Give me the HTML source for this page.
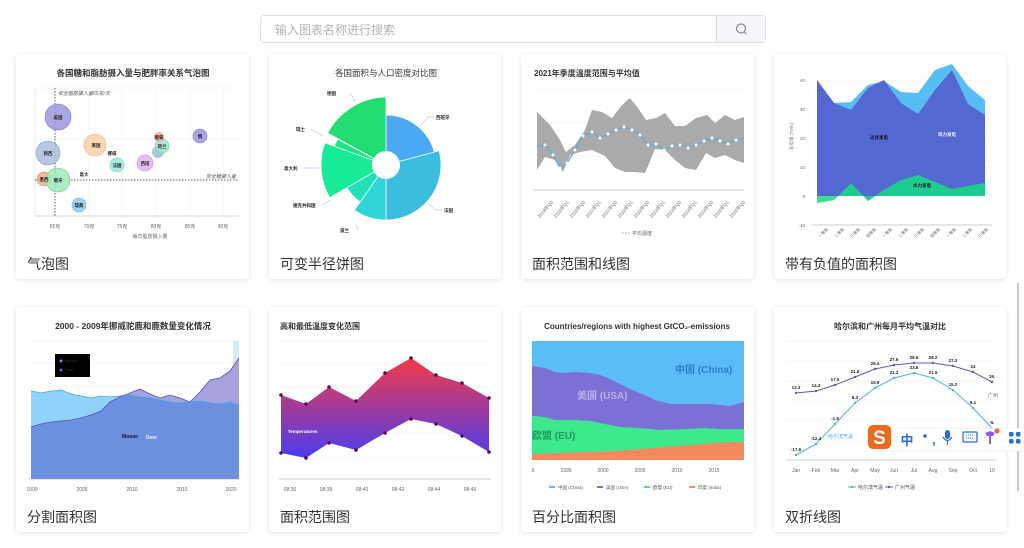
<!DOCTYPE html>
<html><head><meta charset="utf-8"><style>
*{margin:0;padding:0;box-sizing:border-box}
body{width:1024px;height:548px;background:#fff;position:relative;overflow:hidden;font-family:"Liberation Sans","Noto Sans CJK SC",sans-serif}
.card{position:absolute;background:#fff;border-radius:3px;box-shadow:0 1px 5px rgba(0,0,0,.12)}
.lbl{position:absolute;font-size:14px;color:#333}
.search{position:absolute;left:260px;top:15px;width:506px;height:28px;border:1px solid #dcdfe6;border-radius:4px;background:#fff}
.search span{position:absolute;left:14px;top:5px;font-size:12px;color:#b0b3b8}
.search .btn{position:absolute;right:0;top:0;width:49px;height:26px;background:#f5f7fa;border-left:1px solid #dcdfe6}
svg text{font-family:"Liberation Sans","Noto Sans CJK SC",sans-serif}
</style></head><body>
<div class="search"><span>输入图表名称进行搜索</span><div class="btn"><svg width="49" height="26"><circle cx="24" cy="12.5" r="4.5" fill="none" stroke="#888" stroke-width="1.2"/><line x1="27.3" y1="15.8" x2="29.5" y2="18" stroke="#888" stroke-width="1.2"/></svg></div></div>
<div class="card" style="left:16px;top:54px;width:233px;height:225px"></div>
<div class="card" style="left:269px;top:54px;width:232px;height:225px"></div>
<div class="card" style="left:521px;top:54px;width:233px;height:225px"></div>
<div class="card" style="left:774px;top:54px;width:232px;height:225px"></div>
<div class="card" style="left:16px;top:307px;width:233px;height:225px"></div>
<div class="card" style="left:269px;top:307px;width:232px;height:225px"></div>
<div class="card" style="left:521px;top:307px;width:233px;height:225px"></div>
<div class="card" style="left:774px;top:307px;width:232px;height:225px"></div>
<div class="lbl" style="left:27px;top:254px">气泡图</div>
<div class="lbl" style="left:280px;top:254px">可变半径饼图</div>
<div class="lbl" style="left:532px;top:254px">面积范围和线图</div>
<div class="lbl" style="left:785px;top:254px">带有负值的面积图</div>
<div class="lbl" style="left:27px;top:507px">分割面积图</div>
<div class="lbl" style="left:280px;top:507px">面积范围图</div>
<div class="lbl" style="left:532px;top:507px">百分比面积图</div>
<div class="lbl" style="left:785px;top:507px">双折线图</div>
<div style="position:absolute;left:1017px;top:283px;width:2px;height:208px;background:#c8c8c8"></div>

<svg width="1024" height="548" style="position:absolute;left:0;top:0">
<defs><linearGradient id="rg" x1="0" y1="0" x2="0" y2="1"><stop offset="0" stop-color="#f43a45"/><stop offset="1" stop-color="#4a3cf0"/></linearGradient></defs>
<!-- card1 bubble -->
<text x="133" y="76" font-size="8.5" font-weight="bold" fill="#333" text-anchor="middle">各国糖和脂肪摄入量与肥胖率关系气泡图</text>
<g stroke="#eee" stroke-width="0.6"><line x1="35" y1="88" x2="239" y2="88"/><line x1="35" y1="139" x2="239" y2="139"/><line x1="89" y1="88" x2="89" y2="216"/><line x1="122" y1="88" x2="122" y2="216"/><line x1="156" y1="88" x2="156" y2="216"/><line x1="190" y1="88" x2="190" y2="216"/><line x1="223" y1="88" x2="223" y2="216"/></g>
<line x1="35" y1="216" x2="239" y2="216" stroke="#ccc" stroke-width="0.8"/>
<line x1="35" y1="88" x2="35" y2="216" stroke="#ddd" stroke-width="0.6"/>
<line x1="55" y1="88" x2="55" y2="216" stroke="#333" stroke-width="0.8" stroke-dasharray="1.5,1.5"/>
<line x1="35" y1="180" x2="239" y2="180" stroke="#333" stroke-width="0.8" stroke-dasharray="1.5,1.5"/>
<text x="58" y="95" font-size="5" fill="#555" font-style="italic">安全脂肪摄入量65克/天</text>
<text x="206" y="178" font-size="5" fill="#555" font-style="italic">安全糖摄入量</text>
<g stroke-width="0.6" fill-opacity="0.85">
<circle cx="58" cy="117" r="13" fill="#9b96dc" stroke="#7b74c8"/>
<circle cx="48" cy="153" r="12" fill="#a9bedd" stroke="#8aa0c8"/>
<circle cx="95" cy="145" r="11" fill="#fbd0a6" stroke="#f0b07c"/>
<circle cx="117" cy="165" r="7" fill="#9ee6dc" stroke="#6cd4c6"/>
<circle cx="145" cy="163" r="8" fill="#e1b1ee" stroke="#c98ee0"/>
<circle cx="158" cy="152" r="6" fill="#9fb8d8"/>
<circle cx="162" cy="146" r="7" fill="#a1e5c8" stroke="#66d0a0"/>
<circle cx="159" cy="137" r="5" fill="#f0a898"/>
<circle cx="200" cy="136" r="7" fill="#9c95e0" stroke="#7b74c8"/>
<circle cx="44" cy="179" r="7" fill="#f5a98a" stroke="#e88a66"/>
<circle cx="58" cy="180" r="12" fill="#9deab8" stroke="#60d88a"/>
<circle cx="79" cy="205" r="7" fill="#8ec9f3" stroke="#5fb0ea"/>
</g>
<g font-size="4.5" fill="#222" font-weight="bold" text-anchor="middle">
<text x="58" y="119">美国</text><text x="48" y="155">新西</text><text x="96" y="147">英国</text><text x="112" y="155">挪威</text><text x="117" y="167">法国</text><text x="145" y="165">西班</text><text x="159" y="139">葡萄</text><text x="162" y="148">荷兰</text><text x="200" y="138">俄</text><text x="84" y="176">意大</text><text x="44" y="181">墨西</text><text x="58" y="182">葡牙</text><text x="79" y="207">瑞典</text>
</g>
<g font-size="5" fill="#666" text-anchor="middle"><text x="55" y="228">65克</text><text x="89" y="228">70克</text><text x="122" y="228">75克</text><text x="156" y="228">80克</text><text x="190" y="228">85克</text><text x="223" y="228">90克</text><text x="150" y="238">每日脂肪摄入量</text></g>

<!-- card2 pie -->
<text x="386" y="76" font-size="8.5" fill="#333" text-anchor="middle">各国面积与人口密度对比图</text>
<g stroke="#fff" stroke-width="0.7">
<path d="M386,165 L386,115 A50,50 0 0 1 434.3,152.1 Z" fill="#4aa8f5"/>
<path d="M386,165 L439.1,150.8 A55,55 0 0 1 386,220 Z" fill="#3bbde0"/>
<path d="M386,165 L386,220 A55,55 0 0 1 354.5,210.1 Z" fill="#2fd6d8"/>
<path d="M386,165 L360.2,201.9 A45,45 0 0 1 347,187.5 Z" fill="#22e0b8"/>
<path d="M386,165 L329.7,197.5 A65,65 0 0 1 324.9,142.8 Z" fill="#17eb98"/>
<path d="M386,165 L334.3,146.2 A55,55 0 0 1 337.6,139.2 Z" fill="#1ee486"/>
<path d="M386,165 L327.6,133 A68,68 0 0 1 386,97 Z" fill="#22dd70"/>
</g>
<circle cx="386" cy="165" r="14" fill="#fff"/>
<g stroke="#8ad" stroke-width="0.5" fill="none"><polyline points="420,126 428,117 434,117"/><polyline points="428,203 436,210 442,210"/><polyline points="350,93 356,102"/><polyline points="311,129 323,136"/><polyline points="304,168 320,168"/><polyline points="322,205 331,200"/><polyline points="358,230 356,225"/></g>
<g font-size="4.5" fill="#222" font-weight="bold"><text x="327" y="95">德国</text><text x="436" y="119">西班牙</text><text x="296" y="131">瑞士</text><text x="284" y="170">意大利</text><text x="293" y="207">捷克共和国</text><text x="340" y="232">波兰</text><text x="444" y="212">法国</text></g>

<!-- card3 range line -->
<text x="534" y="76" font-size="8" font-weight="bold" fill="#333">2021年季度温度范围与平均值</text>
<g stroke="#eee" stroke-width="0.5"><line x1="533" y1="88" x2="744" y2="88"/><line x1="533" y1="122" x2="744" y2="122"/><line x1="533" y1="156" x2="744" y2="156"/></g>
<polygon fill="#aaa" points="537,112 550,125 560,140 566,152 575,145 585,130 592,110 602,112 612,118 622,105 630,98 638,108 646,120 656,118 665,113 675,126 685,126 696,118 707,115 715,123 725,115 735,120 744,117 744,163 735,160 725,155 715,158 706,153 696,170 685,168 675,160 665,150 655,149 645,173 635,172 625,172 615,168 605,156 592,150 580,152 570,155 563,172 555,160 545,157 537,170"/>
<line x1="533" y1="190" x2="744" y2="190" stroke="#bbb" stroke-width="0.8"/>
<polyline fill="none" stroke="#5aaee0" stroke-width="1.3" points="537,146 545,145 553,155 560,168 567,163 575,150 583,136 592,132 600,138 608,134 616,130 624,127 632,130 640,135 648,145 656,144 664,150 672,146 680,145 688,148 696,145 704,141 712,138 720,141 728,144 736,140 744,139"/>
<g fill="#fff"><circle cx="545" cy="145" r="1.5"/><circle cx="553" cy="155" r="1.5"/><circle cx="560" cy="168" r="1.5"/><circle cx="567" cy="163" r="1.5"/><circle cx="575" cy="150" r="1.5"/><circle cx="583" cy="136" r="1.5"/><circle cx="592" cy="132" r="1.5"/><circle cx="600" cy="138" r="1.5"/><circle cx="608" cy="134" r="1.5"/><circle cx="616" cy="130" r="1.5"/><circle cx="624" cy="127" r="1.5"/><circle cx="632" cy="130" r="1.5"/><circle cx="640" cy="135" r="1.5"/><circle cx="648" cy="145" r="1.5"/><circle cx="656" cy="144" r="1.5"/><circle cx="664" cy="150" r="1.5"/><circle cx="672" cy="146" r="1.5"/><circle cx="680" cy="145" r="1.5"/><circle cx="688" cy="148" r="1.5"/><circle cx="696" cy="145" r="1.5"/><circle cx="704" cy="141" r="1.5"/><circle cx="712" cy="138" r="1.5"/><circle cx="720" cy="141" r="1.5"/><circle cx="728" cy="144" r="1.5"/><circle cx="736" cy="140" r="1.5"/></g>
<g font-size="4.5" fill="#666">
<text transform="translate(540,218) rotate(-50)">2019年Q3</text><text transform="translate(556,218) rotate(-50)">2020年Q1</text><text transform="translate(572,218) rotate(-50)">2020年Q3</text><text transform="translate(588,218) rotate(-50)">2021年Q1</text><text transform="translate(604,218) rotate(-50)">2021年Q3</text><text transform="translate(620,218) rotate(-50)">2022年Q1</text><text transform="translate(636,218) rotate(-50)">2022年Q3</text><text transform="translate(652,218) rotate(-50)">2023年Q1</text><text transform="translate(668,218) rotate(-50)">2023年Q3</text><text transform="translate(684,218) rotate(-50)">2024年Q1</text><text transform="translate(700,218) rotate(-50)">2024年Q3</text><text transform="translate(716,218) rotate(-50)">2025年Q1</text><text transform="translate(732,218) rotate(-50)">2025年Q3</text>
</g>
<line x1="622" y1="233" x2="630" y2="233" stroke="#5aaee0" stroke-dasharray="1.5,1.5"/><text x="632" y="235" font-size="5" fill="#666">平均温度</text>

<!-- card4 negative area -->
<g stroke="#eee" stroke-width="0.5"><line x1="812" y1="80" x2="992" y2="80"/><line x1="812" y1="109" x2="992" y2="109"/><line x1="812" y1="138" x2="992" y2="138"/><line x1="812" y1="167" x2="992" y2="167"/><line x1="812" y1="196" x2="992" y2="196"/></g>
<line x1="812" y1="225" x2="992" y2="225" stroke="#999" stroke-width="0.6"/>
<g font-size="4.5" fill="#666" text-anchor="end"><text x="805" y="82">40</text><text x="805" y="111">30</text><text x="805" y="140">20</text><text x="805" y="169">10</text><text x="805" y="198">0</text><text x="805" y="227">-10</text></g>
<text transform="translate(793,150) rotate(-90)" font-size="4.5" fill="#888">发电量 (TWh)</text>
<polygon fill="#58bdf5" points="817,80 834,103 851,102 868,85 884,81 901,92 918,93 935,70 952,64 968,86 985,100 985,196 817,196"/>
<polygon fill="#5468d1" points="817,80 834,103 851,110 868,88 884,80 901,103 918,114 935,90 952,70 968,104 985,115 985,196 817,196"/>
<polygon fill="#1fcc8f" points="817,203 834,200 851,183 868,201 884,190 901,180 918,175 935,182 952,189 968,186 985,183 985,196 817,196"/>
<polygon fill="#35e08e" points="817,196 817,203 834,200 838,196"/>
<g font-size="4.5" font-weight="bold"><text x="870" y="139" fill="#111">光伏发电</text><text x="938" y="136" fill="#eef">风力发电</text><text x="913" y="187" fill="#111">水力发电</text></g>
<g font-size="4" fill="#666"><text transform="translate(820,238) rotate(-45)">一季度</text><text transform="translate(836,238) rotate(-45)">二季度</text><text transform="translate(852,238) rotate(-45)">三季度</text><text transform="translate(868,238) rotate(-45)">四季度</text><text transform="translate(884,238) rotate(-45)">一季度</text><text transform="translate(900,238) rotate(-45)">二季度</text><text transform="translate(916,238) rotate(-45)">三季度</text><text transform="translate(932,238) rotate(-45)">四季度</text><text transform="translate(948,238) rotate(-45)">一季度</text><text transform="translate(964,238) rotate(-45)">二季度</text><text transform="translate(980,238) rotate(-45)">三季度</text></g>

<!-- row2 card1 -->
<text x="133" y="329" font-size="8.5" font-weight="bold" fill="#333" text-anchor="middle">2000 - 2009年挪威驼鹿和鹿数量变化情况</text>
<g stroke="#eee" stroke-width="0.5"><line x1="29" y1="341" x2="239" y2="341"/><line x1="29" y1="363" x2="239" y2="363"/><line x1="29" y1="386" x2="239" y2="386"/><line x1="29" y1="409" x2="239" y2="409"/><line x1="29" y1="432" x2="239" y2="432"/><line x1="29" y1="455" x2="239" y2="455"/></g>
<rect x="233" y="341" width="6" height="138" fill="#d6ecf7"/>
<polygon fill="#8fd3fa" points="31,391 41,393 51,391 61,390 71,394 81,396 91,398 101,396 110,397 120,396 130,395 140,397 150,398 160,400 170,402 180,403 190,402 200,401 210,403 220,404 230,402 239,405 239,479 31,479"/>
<polygon fill="#a7a1e0" points="31,427 41,424 51,422 61,421 71,420 81,418 91,415 101,411 110,402 120,397 130,393 140,389 150,394 160,398 170,395 180,398 190,402 200,392 210,380 220,378 230,371 239,358 239,479 31,479"/>
<polygon fill="#6d8fe0" points="31,427 41,424 51,422 61,421 71,420 81,418 91,415 101,411 110,402 120,397 130,395 140,397 150,398 160,400 170,402 180,403 190,402 200,401 210,403 220,404 230,402 239,405 239,479 31,479"/>
<polyline fill="none" stroke="#3fa5e8" stroke-width="0.8" points="31,391 41,393 51,391 61,390 71,394 81,396 91,398 101,396 110,397 120,396 130,395 140,397 150,398 160,400 170,402 180,403 190,402 200,401 210,403 220,404 230,402 239,405"/>
<polyline fill="none" stroke="#5a4fc0" stroke-width="0.8" points="31,427 41,424 51,422 61,421 71,420 81,418 91,415 101,411 110,402 120,397 130,393 140,389 150,394 160,398 170,395 180,398 190,402 200,392 210,380 220,378 230,371 239,358"/>
<line x1="29" y1="479" x2="239" y2="479" stroke="#999" stroke-width="0.6"/>
<rect x="55" y="354" width="35" height="23" fill="#000"/>
<circle cx="61" cy="361" r="1.5" fill="#3fa5e8"/><circle cx="61" cy="370" r="1.5" fill="#6a5fd0"/>
<text x="65" y="362" font-size="4" fill="#333">Moose</text><text x="65" y="371" font-size="4" fill="#333">Deer</text>
<text x="122" y="438" font-size="5" font-weight="bold" fill="#112">Moose</text><text x="146" y="439" font-size="5" font-weight="bold" fill="#eef">Deer</text>
<g font-size="5" fill="#666" text-anchor="middle"><text x="32" y="491">1000</text><text x="82" y="491">2005</text><text x="132" y="491">2010</text><text x="182" y="491">2015</text><text x="231" y="491">2020</text></g>

<!-- row2 card2 -->
<text x="280" y="329" font-size="8" font-weight="bold" fill="#333">高和最低温度变化范围</text>
<g stroke="#eee" stroke-width="0.5"><line x1="279" y1="341" x2="491" y2="341"/><line x1="279" y1="364" x2="491" y2="364"/><line x1="279" y1="387" x2="491" y2="387"/><line x1="279" y1="410" x2="491" y2="410"/><line x1="279" y1="433" x2="491" y2="433"/><line x1="279" y1="456" x2="491" y2="456"/></g>
<line x1="279" y1="479" x2="491" y2="479" stroke="#999" stroke-width="0.6"/>
<polygon fill="url(#rg)" points="281,395 306,404 329,387 356,401 385,373 411,358 436,375 462,383 489,398 489,452 462,436 436,424 411,419 385,433 356,450 329,443 306,458 281,453"/>
<g fill="#5a0a5a"><circle cx="281" cy="395" r="1.8"/><circle cx="306" cy="404" r="1.8"/><circle cx="329" cy="387" r="1.8"/><circle cx="356" cy="401" r="1.8"/><circle cx="385" cy="373" r="1.8"/><circle cx="411" cy="358" r="1.8"/><circle cx="436" cy="375" r="1.8"/><circle cx="462" cy="383" r="1.8"/><circle cx="489" cy="398" r="1.8"/><circle cx="489" cy="452" r="1.8"/><circle cx="462" cy="436" r="1.8"/><circle cx="436" cy="424" r="1.8"/><circle cx="411" cy="419" r="1.8"/><circle cx="385" cy="433" r="1.8"/><circle cx="356" cy="450" r="1.8"/><circle cx="329" cy="443" r="1.8"/><circle cx="306" cy="458" r="1.8"/><circle cx="281" cy="453" r="1.8"/></g>
<text x="288" y="433" font-size="4.5" font-weight="bold" fill="#fff">Temperatures</text>
<g font-size="5" fill="#666" text-anchor="middle"><text x="290" y="491">08:36</text><text x="326" y="491">08:38</text><text x="362" y="491">08:40</text><text x="398" y="491">08:42</text><text x="434" y="491">08:44</text><text x="470" y="491">08:46</text></g>

<!-- row2 card3 -->
<text x="637" y="329" font-size="8" font-weight="bold" fill="#333" text-anchor="middle">Countries/regions with highest GtCO₂-emissions</text>
<rect x="532" y="341" width="212" height="119" fill="#5bbcf8"/>
<polygon fill="#7b70d6" points="532,366 545,368 555,372 565,373 575,372 590,373 600,375 610,379 620,384 632,390 645,395 655,400 670,404 690,404 710,404 730,406 744,402 744,460 532,460"/>
<polygon fill="#3ee88c" points="532,416 545,417 555,420 575,420 590,421 605,424 620,427 640,428 660,430 685,429 705,428 720,429 744,429 744,460 532,460"/>
<polygon fill="#f58a5f" points="532,454 560,453 590,452 615,451 640,449 665,447 690,445 715,443 735,442 744,442 744,460 532,460"/>
<g font-weight="bold"><text x="675" y="373" font-size="10" fill="#2a7fc8">中国 (China)</text><text x="577" y="399" font-size="10" fill="#b9b2ea">美国 (USA)</text><text x="532" y="439" font-size="10" fill="#1a9a5e">欧盟 (EU)</text></g>
<g font-size="5" fill="#666" text-anchor="middle"><text x="533" y="472">0</text><text x="566" y="472">1995</text><text x="603" y="472">2000</text><text x="640" y="472">2005</text><text x="677" y="472">2010</text><text x="714" y="472">2015</text></g>
<g font-size="4.5" fill="#555"><rect x="549" y="486" width="6" height="2" fill="#5bbcf8"/><text x="558" y="489">中国 (China)</text><rect x="597" y="486" width="6" height="2" fill="#7b70d6"/><text x="606" y="489">美国 (USA)</text><rect x="644" y="486" width="6" height="2" fill="#3ee88c"/><text x="653" y="489">欧盟 (EU)</text><rect x="689" y="486" width="6" height="2" fill="#f58a5f"/><text x="698" y="489">印度 (India)</text></g>

<!-- row2 card4 -->
<text x="890" y="329" font-size="8" font-weight="bold" fill="#333" text-anchor="middle">哈尔滨和广州每月平均气温对比</text>
<g stroke="#eee" stroke-width="0.5"><line x1="786" y1="341" x2="996" y2="341"/><line x1="786" y1="361" x2="996" y2="361"/><line x1="786" y1="381" x2="996" y2="381"/><line x1="786" y1="400" x2="996" y2="400"/><line x1="786" y1="420" x2="996" y2="420"/><line x1="786" y1="440" x2="996" y2="440"/></g>
<line x1="786" y1="460" x2="996" y2="460" stroke="#999" stroke-width="0.6"/>
<polyline fill="none" stroke="#6a55b8" stroke-width="1" points="796,393 816,391 835,385 855,377 875,369 894,365 914,363 933,363 953,366 973,372 992,382"/>
<polyline fill="none" stroke="#4fb2e6" stroke-width="1" points="796,455 816,444 835,424 855,403 875,388 894,378 914,373 933,378 953,390 973,408 992,428"/>
<g fill="#6a55b8"><circle cx="796" cy="393" r="1.2"/><circle cx="816" cy="391" r="1.2"/><circle cx="835" cy="385" r="1.2"/><circle cx="855" cy="377" r="1.2"/><circle cx="875" cy="369" r="1.2"/><circle cx="894" cy="365" r="1.2"/><circle cx="914" cy="363" r="1.2"/><circle cx="933" cy="363" r="1.2"/><circle cx="953" cy="366" r="1.2"/><circle cx="973" cy="372" r="1.2"/><circle cx="992" cy="382" r="1.2"/></g>
<g fill="#4fb2e6"><circle cx="796" cy="455" r="1.2"/><circle cx="816" cy="444" r="1.2"/><circle cx="835" cy="424" r="1.2"/><circle cx="855" cy="403" r="1.2"/><circle cx="875" cy="388" r="1.2"/><circle cx="894" cy="378" r="1.2"/><circle cx="914" cy="373" r="1.2"/><circle cx="933" cy="378" r="1.2"/><circle cx="953" cy="390" r="1.2"/><circle cx="973" cy="408" r="1.2"/></g>
<g font-size="4.5" font-weight="bold" fill="#222" text-anchor="middle"><text x="796" y="389">13.3</text><text x="816" y="387">14.3</text><text x="835" y="381">17.5</text><text x="855" y="373">21.6</text><text x="875" y="365">25.4</text><text x="894" y="361">27.6</text><text x="914" y="359">28.6</text><text x="933" y="359">28.2</text><text x="953" y="362">27.2</text><text x="973" y="368">24</text><text x="992" y="378">19.</text>
<text x="796" y="451">-17.6</text><text x="816" y="440">-12.4</text><text x="835" y="420">-1.9</text><text x="855" y="399">8.3</text><text x="875" y="384">15.9</text><text x="894" y="374">21.2</text><text x="914" y="369">23.6</text><text x="933" y="374">21.5</text><text x="953" y="386">15.2</text><text x="973" y="404">6.1</text><text x="992" y="424">-5.</text></g>
<text x="988" y="397" font-size="5" fill="#6a55b8">广州</text>
<text x="828" y="438" font-size="5" fill="#4fb2e6">哈尔滨气温</text>
<g font-size="5" fill="#666" text-anchor="middle"><text x="796" y="472">Jan</text><text x="816" y="472">Feb</text><text x="835" y="472">Mar</text><text x="855" y="472">Apr</text><text x="875" y="472">May</text><text x="894" y="472">Jun</text><text x="914" y="472">Jul</text><text x="933" y="472">Aug</text><text x="953" y="472">Sep</text><text x="973" y="472">Oct</text><text x="992" y="472">10</text></g>
<g font-size="5" fill="#555"><line x1="848" y1="487" x2="856" y2="487" stroke="#4fb2e6"/><circle cx="852" cy="487" r="1.2" fill="#4fb2e6"/><text x="858" y="489">哈尔滨气温</text><line x1="885" y1="487" x2="893" y2="487" stroke="#6a55b8"/><circle cx="889" cy="487" r="1.2" fill="#6a55b8"/><text x="895" y="489">广州气温</text></g>

<!-- IME toolbar -->
<rect x="873" y="428" width="152" height="23" fill="#fff" stroke="#e3e6ea" stroke-width="0.6"/>
<rect x="868" y="425" width="23" height="24" rx="5" fill="#f06a1e"/>
<text x="879.5" y="444" font-size="19" font-weight="bold" fill="#fff" text-anchor="middle">S</text>
<text x="907" y="445" font-size="13" font-weight="bold" fill="#2b6fd3" text-anchor="middle">中</text>
<circle cx="925" cy="436" r="1.8" fill="#2b6fd3"/><text x="932" y="444" font-size="13" font-weight="bold" fill="#2b6fd3">,</text>
<rect x="945" y="430" width="5" height="9" rx="2.5" fill="#2b6fd3"/><path d="M943,437 Q947.5,444 952,437 M947.5,441 V445" stroke="#2b6fd3" stroke-width="1.2" fill="none"/>
<rect x="963" y="432" width="14" height="10" rx="1" fill="none" stroke="#2b6fd3" stroke-width="1.3"/><path d="M966,435h8M966,438h8" stroke="#2b6fd3" stroke-width="0.9" stroke-dasharray="1,1"/>
<path d="M985,433 L990,431 L995,433 L993,436 L991,436 L991,444 L989,444 L989,436 L987,436 Z" fill="#8a5ce8"/>
<circle cx="997" cy="431" r="2.5" fill="#f05a4a"/>
<rect x="1009" y="432" width="4.5" height="4.5" rx="1" fill="#2b6fd3"/><rect x="1016" y="432" width="4.5" height="4.5" rx="1" fill="#2b6fd3"/><rect x="1009" y="439" width="4.5" height="4.5" rx="1" fill="#2b6fd3"/><rect x="1016" y="439" width="4.5" height="4.5" rx="1" fill="#2b6fd3"/>
</svg>
</body></html>
